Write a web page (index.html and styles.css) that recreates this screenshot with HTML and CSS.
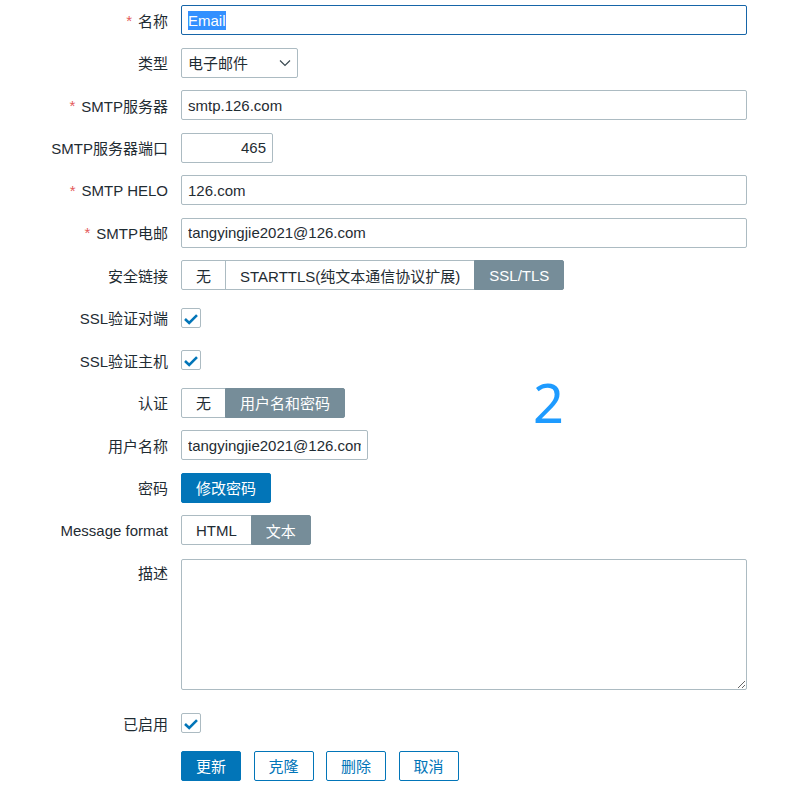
FILE: index.html
```html
<!DOCTYPE html>
<html>
  <head>
    <meta name="viewport" content="width=device-width,initial-scale=1.0">
    <title>媒介类型 - Email</title>
    <link rel="stylesheet" href="styles.css">
  </head>
  <body>
    <form class="form-grid">
      <label class="label required">名称</label>
      <div class="field">
        <div class="textbox focused"><span class="sel">Email</span></div>
      </div>

      <label class="label">类型</label>
      <div class="field">
        <div class="select">
          <span>电子邮件</span>
          <svg width="12" height="8" viewBox="0 0 12 8"><path d="M1 1.5 L6 6.5 L11 1.5" fill="none" stroke="#3b4a52" stroke-width="1.2"/></svg>
        </div>
      </div>

      <label class="label required">SMTP服务器</label>
      <div class="field"><input class="input" type="text" value="smtp.126.com"></div>

      <label class="label">SMTP服务器端口</label>
      <div class="field"><input class="input port" type="text" value="465"></div>

      <label class="label required">SMTP HELO</label>
      <div class="field"><input class="input" type="text" value="126.com"></div>

      <label class="label required">SMTP电邮</label>
      <div class="field"><input class="input" type="text" value="tangyingjie2021@126.com"></div>

      <label class="label">安全链接</label>
      <div class="field">
        <div class="segmented">
          <span class="seg">无</span>
          <span class="seg">STARTTLS(纯文本通信协议扩展)</span>
          <span class="seg active">SSL/TLS</span>
        </div>
      </div>

      <label class="label">SSL验证对端</label>
      <div class="field">
        <span class="checkbox"><svg width="18" height="18" viewBox="0 0 18 18"><path d="M3 10 L7.2 14 L15 6.2" fill="none" stroke="#0275b8" stroke-width="2.6"/></svg></span>
      </div>

      <label class="label">SSL验证主机</label>
      <div class="field">
        <span class="checkbox"><svg width="18" height="18" viewBox="0 0 18 18"><path d="M3 10 L7.2 14 L15 6.2" fill="none" stroke="#0275b8" stroke-width="2.6"/></svg></span>
      </div>

      <label class="label">认证</label>
      <div class="field">
        <div class="segmented">
          <span class="seg">无</span>
          <span class="seg active">用户名和密码</span>
        </div>
      </div>

      <label class="label">用户名称</label>
      <div class="field"><input class="input user" type="text" value="tangyingjie2021@126.com"></div>

      <label class="label">密码</label>
      <div class="field"><button type="button" class="btn primary">修改密码</button></div>

      <label class="label">Message format</label>
      <div class="field">
        <div class="segmented">
          <span class="seg">HTML</span>
          <span class="seg active">文本</span>
        </div>
      </div>

      <label class="label top">描述</label>
      <div class="field area"><textarea class="textarea"></textarea></div>

      <label class="label">已启用</label>
      <div class="field">
        <span class="checkbox"><svg width="18" height="18" viewBox="0 0 18 18"><path d="M3 10 L7.2 14 L15 6.2" fill="none" stroke="#0275b8" stroke-width="2.6"/></svg></span>
      </div>

      <span></span>
      <div class="field buttons">
        <button type="button" class="btn primary">更新</button>
        <button type="button" class="btn">克隆</button>
        <button type="button" class="btn">删除</button>
        <button type="button" class="btn">取消</button>
      </div>
    </form>

    <div class="note">2</div>
  </body>
</html>
```

FILE: styles.css
```css
body {
  margin: 0;
  background: #fff;
  color: #1f2c33;
  font-family: "Liberation Sans", Arial, "Noto Sans CJK SC", sans-serif;
  font-size: 15px;
  position: relative;
}

.form-grid {
  display: grid;
  grid-template-columns: 168px 566px;
  column-gap: 13px;
  row-gap: 12.5px;
  padding-top: 5px;
}

.label {
  display: flex;
  align-items: center;
  justify-content: flex-end;
  min-height: 30px;
  white-space: nowrap;
}

.label.top {
  align-self: start;
  height: 30px;
}

.required::before {
  content: "*";
  color: #e45959;
  margin-right: 6px;
}

.field {
  display: flex;
  align-items: center;
  min-height: 30px;
}

.input,
.textbox,
.select {
  box-sizing: border-box;
  height: 30px;
  width: 566px;
  padding: 0 6px;
  border: 1px solid #acbbc2;
  border-radius: 2px;
  font: inherit;
  color: #1f2c33;
  background: #fff;
  outline: none;
}

.textbox {
  display: flex;
  align-items: center;
}

.focused {
  border-color: #1665a8;
}

.sel {
  background: #3390ff;
  color: #fff;
  line-height: 19px;
}

.port {
  width: 92px;
  text-align: right;
}

.user {
  width: 187px;
}

.select {
  width: 117px;
  display: flex;
  align-items: center;
  justify-content: space-between;
  padding-right: 6px;
}

.segmented {
  display: flex;
}

.seg {
  box-sizing: border-box;
  height: 30px;
  display: flex;
  align-items: center;
  padding: 0 14px;
  border: 1px solid #acbbc2;
  margin-left: -1px;
  background: #fff;
}

.seg:first-child {
  margin-left: 0;
  border-radius: 2px 0 0 2px;
}

.seg:last-child {
  border-radius: 0 2px 2px 0;
}

.seg.active {
  background: #768d99;
  border-color: #768d99;
  color: #fff;
}

.checkbox {
  box-sizing: border-box;
  width: 20px;
  height: 20px;
  border: 1px solid #acbbc2;
  border-radius: 2px;
  display: flex;
  align-items: center;
  justify-content: center;
}

.area {
  padding-bottom: 6px;
}

.textarea {
  box-sizing: border-box;
  display: block;
  width: 566px;
  height: 131px;
  margin-top: 1px;
  border: 1px solid #acbbc2;
  border-radius: 2px;
  font: inherit;
  resize: both;
}

.buttons {
  gap: 12.5px;
}

.btn {
  box-sizing: border-box;
  height: 30px;
  padding: 0 14px;
  border: 1px solid #0275b8;
  border-radius: 2px;
  background: #fff;
  color: #0275b8;
  font: inherit;
}

.btn.primary {
  background: #0275b8;
  color: #fff;
}

/* annotation drawn over the form */
.note {
  position: absolute;
  left: 533px;
  top: 375px;
  font-family: "Noto Sans", sans-serif;
  font-size: 54px;
  line-height: 54px;
  color: #1e9bff;
}
```
